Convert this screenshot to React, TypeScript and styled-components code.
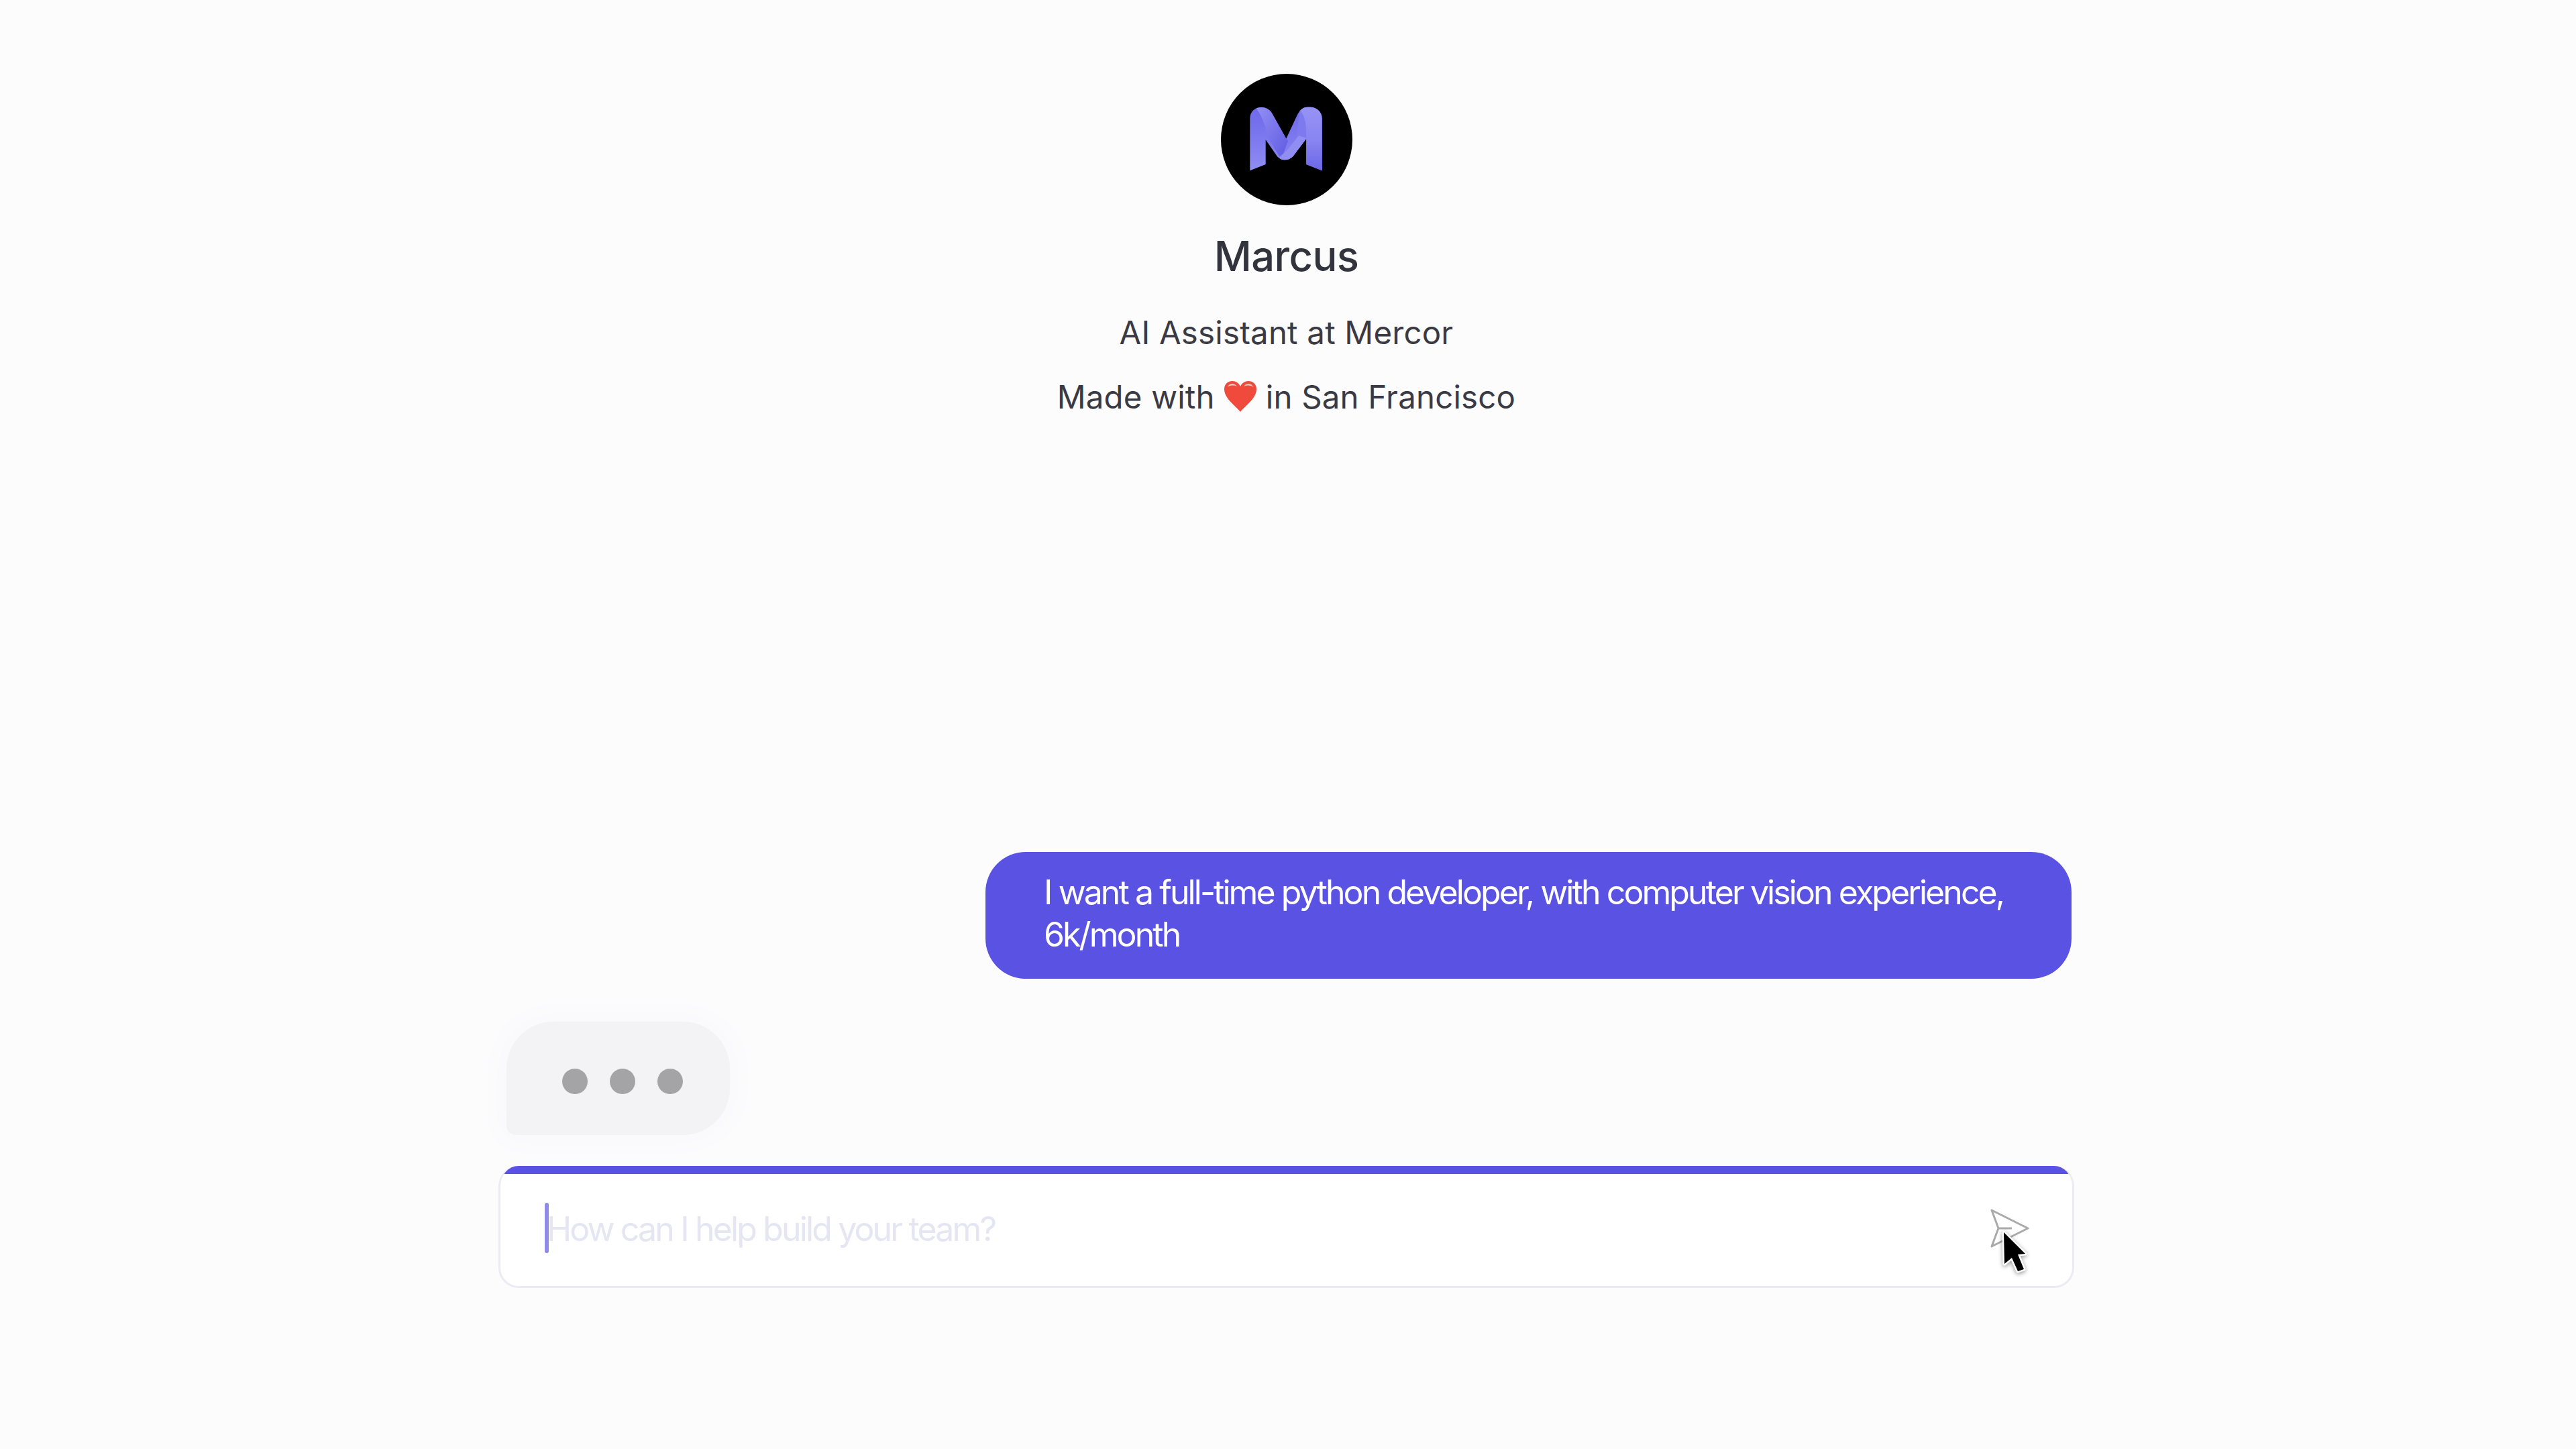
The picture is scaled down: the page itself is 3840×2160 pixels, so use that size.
import React from "react";
import styled, { createGlobalStyle } from "styled-components";

const Global = createGlobalStyle`
  html, body { margin: 0; padding: 0; background: #fcfcfd; }
  body { font-family: Inter, "Liberation Sans", sans-serif; -webkit-font-smoothing: antialiased; }
`;

const Page = styled.main`
  height: 2160px;
  box-sizing: border-box;
  padding: 110px 5px 240px 0;
  display: flex;
  flex-direction: column;
  justify-content: space-between;
  align-items: center;
  background: #fcfcfd;
`;

const Profile = styled.header`
  display: flex;
  flex-direction: column;
  align-items: center;
  color: #3a3a44;
`;

const Avatar = styled.svg`
  display: block;
  width: 196px;
  height: 196px;
`;

const Name = styled.h1`
  margin: 36px 0 0;
  font-size: 61.5px;
  line-height: 80px;
  font-weight: 500;
  letter-spacing: -0.6px;
  color: #33333d;
`;

const Tagline = styled.p`
  margin: 0;
  display: flex;
  align-items: center;
  gap: 13px;
  font-size: 47.4px;
  line-height: 96px;
  font-weight: 400;
  letter-spacing: 0.2px;
`;

const Lead = styled(Tagline)`
  margin-top: 26px;
`;

const Heart = styled.svg`
  width: 50px;
  height: 46px;
  margin-top: -2px;
`;

const Chat = styled.section`
  width: 2345px;
  display: flex;
  flex-direction: column;
`;

const UserBubble = styled.div`
  align-self: flex-end;
  box-sizing: border-box;
  width: 1619px;
  height: 189px;
  margin-right: 2px;
  padding: 29px 60px 0 87px;
  border-radius: 60px;
  background: #5a52e2;
  color: #fff;
  font-size: 50px;
  line-height: 63px;
  letter-spacing: -2.92px;
`;

const Typing = styled.div`
  align-self: flex-start;
  box-sizing: border-box;
  width: 333px;
  height: 169px;
  margin: 64px 0 46px 10px;
  padding: 0 70px 0 83px;
  border-radius: 70px 70px 70px 14px;
  background: #f3f3f6;
  box-shadow: 0 0 36px 8px #f8f8fb;
  display: flex;
  align-items: center;
  justify-content: space-between;
`;

const Dot = styled.span`
  width: 38px;
  height: 38px;
  margin-top: 9px;
  border-radius: 50%;
  background: #a4a4a6;
`;

const Composer = styled.div`
  position: relative;
  box-sizing: border-box;
  height: 182px;
  margin: 0 -2px;
  border: 3px solid #ecebf4;
  border-top: none;
  border-radius: 30px;
  background: #fff;
  overflow: hidden;
  display: flex;
  flex-direction: column;
`;

const Progress = styled.div`
  height: 12px;
  flex: none;
  background: #5a52e2;
`;

const Field = styled.div`
  flex: 1;
  display: flex;
  align-items: center;
  padding: 0 64px 0 66px;
`;

const Caret = styled.span`
  width: 6px;
  height: 75px;
  flex: none;
  margin-top: -6px;
  border-radius: 3px;
  background: #8f8be8;
`;

const Placeholder = styled.span`
  flex: 1;
  margin: -2px 0 0 -3px;
  font-size: 50px;
  line-height: 63px;
  letter-spacing: -2.85px;
  color: #e6e5f2;
`;

const SendIcon = styled.svg`
  width: 58px;
  height: 58px;
  flex: none;
  margin-top: -6px;
`;

const Pointer = styled.svg`
  position: absolute;
  left: 2235px;
  top: 95px;
  width: 60px;
  height: 80px;
  filter: drop-shadow(0 2px 3px rgba(0, 0, 0, 0.4));
`;

const MLogo = () => (
  <Avatar viewBox="0 0 196 196">
    <defs>
      <clipPath id="m-shape">
        <path d="M43.3 144.3 V66.7 C43.3 56 51 50 60.7 50 C68 50 74 54 77.3 61 L97.3 96.7 L114 61 C118 53 124 49.3 130.7 49.3 C142 49.3 150.7 56 150.7 66.7 V144.3 L127.3 135 V96.7 L107.3 123.3 C103 127 100 128.3 95.7 128.3 C91 128.3 88 127 84 123.3 L66.7 98.3 V135 Z" />
      </clipPath>
      <linearGradient id="m-left" x1="0" y1="0" x2="0" y2="1">
        <stop offset="0" stopColor="#6c68ea" />
        <stop offset="0.45" stopColor="#7b77ee" />
        <stop offset="1" stopColor="#9390f3" />
      </linearGradient>
      <linearGradient id="m-right" x1="0" y1="0" x2="0" y2="1">
        <stop offset="0" stopColor="#9793f5" />
        <stop offset="0.5" stopColor="#8884f1" />
        <stop offset="1" stopColor="#6763e6" />
      </linearGradient>
      <linearGradient id="m-mid" x1="0" y1="0" x2="1" y2="1">
        <stop offset="0" stopColor="#9491f4" />
        <stop offset="1" stopColor="#5f5ae3" />
      </linearGradient>
    </defs>
    <circle cx="98" cy="98" r="98" fill="#000" />
    <g clipPath="url(#m-shape)">
      <rect x="40" y="45" width="115" height="105" fill="url(#m-left)" />
      <path d="M50 48 H72 L100 100 L90 128 L70 95 C66 75 60 60 50 48 Z" fill="url(#m-mid)" />
      <path d="M118 52 C128 62 127 80 127 97 L107 123 L85 125 C96 118 106 105 112 95 Z" fill="#7d79ee" />
      <path d="M85 126 C96 118 106 105 116 92 L128 96 L110 126 L96 132 Z" fill="#918ef3" />
      <path d="M114 50 H155 V150 H127 V90 C127 72 125 60 114 50 Z" fill="url(#m-right)" />
    </g>
  </Avatar>
);

const HeartIcon = () => (
  <Heart viewBox="0 0 50 46">
    <path d="M25 46 C17 36 1 26 1 12 C1 4 7 0 13 0 C18 0 23 3 25 8 C27 3 32 0 37 0 C43 0 49 4 49 12 C49 26 33 36 25 46 Z" fill="#ef4a3b" />
    <path d="M6 9 C8 3 16 2 20 8 C15 6 10 6 6 9 Z" fill="#e9c9c6" />
    <path d="M30 8 C34 2 42 3 44 9 C40 6 35 6 30 8 Z" fill="#e9c9c6" />
  </Heart>
);

export default function App() {
  return (
    <>
      <Global />
      <Page>
        <Profile>
          <MLogo />
          <Name>Marcus</Name>
          <Lead>AI Assistant at Mercor</Lead>
          <Tagline>
            <span>Made with</span>
            <HeartIcon />
            <span>in San Francisco</span>
          </Tagline>
        </Profile>
        <Chat>
          <UserBubble>
            I want a full-time python developer, with computer vision experience, 6k/month
          </UserBubble>
          <Typing>
            <Dot />
            <Dot />
            <Dot />
          </Typing>
          <Composer>
            <Progress />
            <Field>
              <Caret />
              <Placeholder>How can I help build your team?</Placeholder>
              <SendIcon viewBox="0 0 58 58">
                <path d="M2 2 L56 29 L2 56 L12 29 Z M12 29 H32" fill="none" stroke="#aaaaaa" strokeWidth="3" strokeLinejoin="round" />
              </SendIcon>
            </Field>
            <Pointer viewBox="0 0 60 80">
              <path d="M6 4 L38 36 L27 37 L36 59 L27 62 L18 42 L7 51 Z" fill="#000" stroke="#fff" strokeWidth="5" strokeLinejoin="round" paintOrder="stroke" />
            </Pointer>
          </Composer>
        </Chat>
      </Page>
    </>
  );
}
